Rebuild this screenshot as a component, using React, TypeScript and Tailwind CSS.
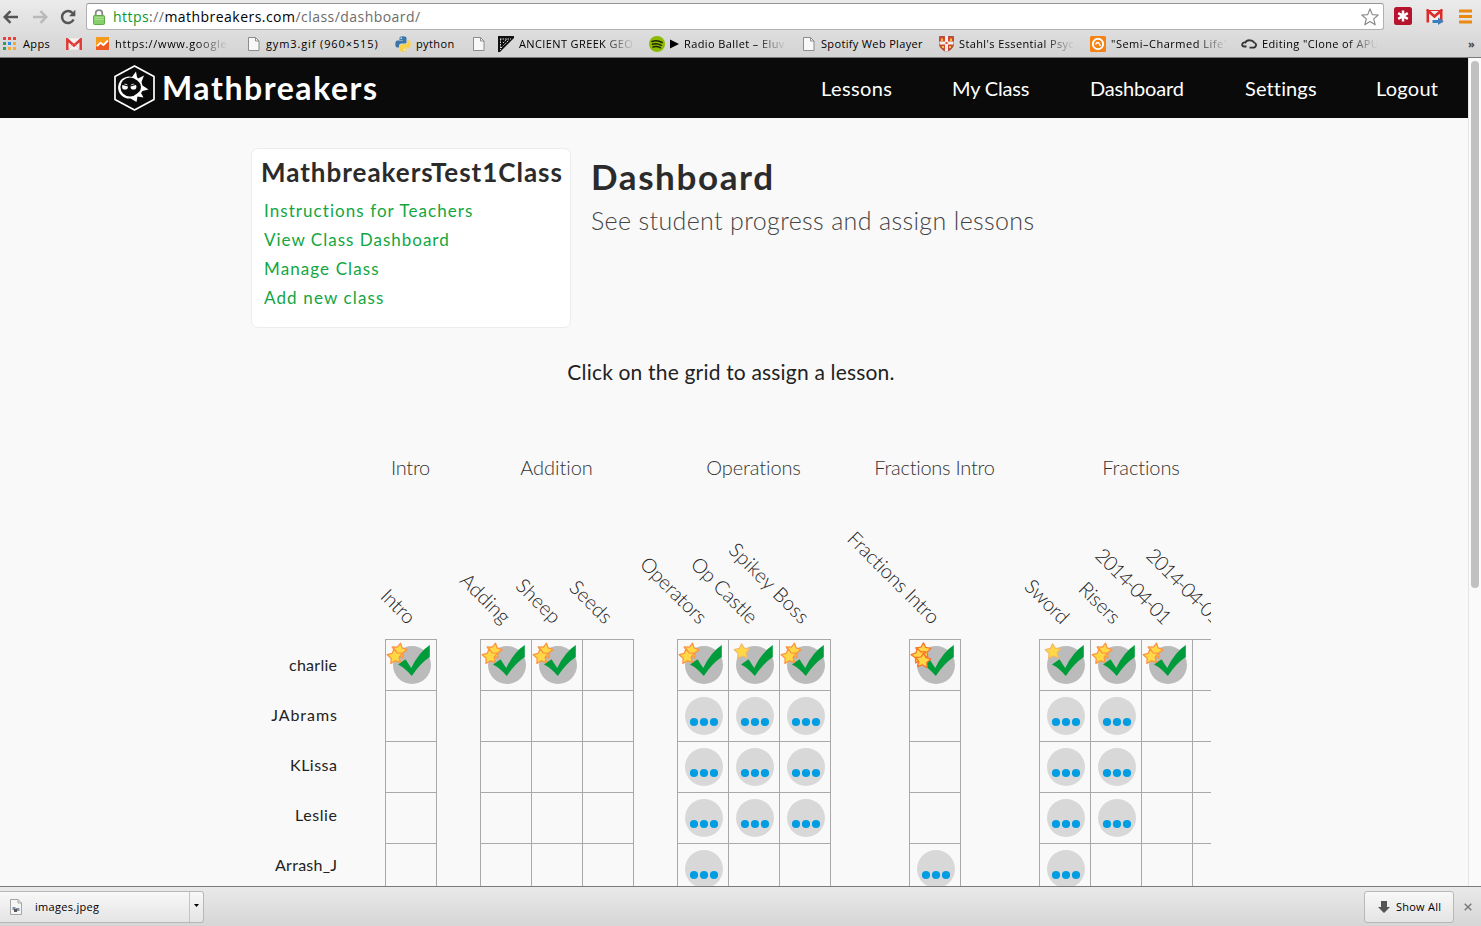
import type { ReactNode } from 'react';

const star = 'M0-7.600 2.400-3.200 7.600-2.400 4 1.500 4.800 6.600 0 4.500-4.800 6.600-4 1.500-7.600-2.400-2.400-3.200Z';

function Star({ x, y, r, tone }: { x: number; y: number; r: number; tone: string }) {
  return (
    <path
      d={star}
      transform={`translate(${x} ${y}) rotate(${r})`}
      fill="#ffd846"
      stroke={tone}
      strokeWidth="1.3"
      strokeLinejoin="round"
    />
  );
}

/* Cell states: "1".."3" = completed with that many stars, "d" = in progress, "." = unassigned */
function CellIcon({ state }: { state: string }) {
  if (state === '.') return null;
  if (state === 'd') {
    return (
      <svg className="-mt-px -ml-px block" width="51" height="51" viewBox="0 0 51 51">
        <circle cx="27" cy="26" r="19" fill="#d8d8d8" />
        <circle cx="17" cy="32" r="4.1" fill="#009de3" />
        <circle cx="27" cy="32" r="4.1" fill="#009de3" />
        <circle cx="37" cy="32" r="4.1" fill="#009de3" />
      </svg>
    );
  }
  return (
    <svg className="-mt-px -ml-px block" width="51" height="51" viewBox="0 0 51 51">
      <circle cx="27" cy="26" r="19" fill="#bbbbbb" />
      <path d="M13 25.5 20.5 20.2 26.2 29Q34 13 44.8 6L44.8 18Q35 24.5 26.8 37Q20 29 13 25.5Z" fill="#009c3b" />
      {state === '1' && <Star x={14} y={12.5} r={-4} tone="#f3b968" />}
      {state === '2' && (
        <>
          <Star x={14.2} y={11.7} r={10} tone="#fb9540" />
          <Star x={10} y={17.3} r={-6} tone="#fb9540" />
        </>
      )}
      {state === '3' && (
        <>
          <Star x={14.2} y={11.5} r={2} tone="#f9762c" />
          <Star x={10} y={16.5} r={-12} tone="#f9762c" />
          <Star x={14} y={21.5} r={6} tone="#f9762c" />
        </>
      )}
    </svg>
  );
}

const base = 'tracking-[-0.25px]';
const date = 'tracking-[-1.1px]';

const groups = [
  { name: 'Intro', track: 'tracking-[-0.3px]', margin: 'ml-12', cols: [['Intro', base]], rows: ['2', '.', '.', '.', '.'] },
  {
    name: 'Addition',
    track: 'tracking-[-0.03px]',
    margin: 'ml-[43px]',
    cols: [['Adding', 'tracking-[0.15px]'], ['Sheep', 'tracking-[0.1px]'], ['Seeds', 'tracking-[0.1px]']],
    rows: ['22.', '...', '...', '...', '...'],
  },
  {
    name: 'Operations',
    track: 'tracking-[-0.09px]',
    margin: 'ml-[43px]',
    cols: [['Operators', base], ['Op Castle', 'tracking-[-0.1px]'], ['Spikey Boss', 'tracking-[0.35px]']],
    rows: ['212', 'ddd', 'ddd', 'ddd', 'd..'],
  },
  { name: 'Fractions Intro', track: 'tracking-[-0.25px]', margin: 'ml-[78px]', cols: [['Fractions Intro', base]], rows: ['3', '.', '.', '.', 'd'] },
  {
    name: 'Fractions',
    track: 'tracking-[-0.08px]',
    margin: 'ml-[78px]',
    cols: [['Sword', base], ['Risers', base], ['2014-04-01', date], ['2014-04-01', date]],
    rows: ['122.', 'dd..', 'dd..', 'dd..', 'd...'],
  },
];

function ProgressGrid() {
  return (
    <section className="flex h-[431px] w-[960px] overflow-hidden text-[#222]">
      <ul className="w-[86px] shrink-0 pt-[185px] text-right text-base leading-[50px]">
        <li className="mr-[-0.3px] tracking-[0.27px]">charlie</li>
        <li className="mr-[-0.9px] tracking-[0.95px]">JAbrams</li>
        <li className="mr-[-0.5px] tracking-[0.5px]">KLissa</li>
        <li className="mr-[-0.6px] tracking-[0.6px]">Leslie</li>
        <li className="mr-[-0.3px] tracking-[0.25px]">Arrash_J</li>
      </ul>
      {groups.map((g) => (
        <div key={g.name} className={`${g.margin} shrink-0`}>
          <div className="flex w-0 min-w-full justify-center">
            <h3 className={`-ml-px text-[20px] leading-6 font-light whitespace-nowrap text-[#333] ${g.track}`}>{g.name}</h3>
          </div>
          <div className="flex h-[160px]">
            {g.cols.map(([c, track], i) => (
              <div key={i} className="relative w-[51px]">
                <span className={`absolute right-[32px] bottom-[11px] origin-bottom-right rotate-45 text-[20px] leading-6 font-light whitespace-nowrap ${track}`}>
                  {c}
                </span>
              </div>
            ))}
          </div>
          <div className="border-t border-l border-[#a9a9a9]">
            {g.rows.map((r, i) => (
              <div key={i} className="flex">
                {r.split('').map((s, j) => (
                  <div key={j} className="size-[51px] border-r border-b border-[#a9a9a9]">
                    <CellIcon state={s} />
                  </div>
                ))}
              </div>
            ))}
          </div>
        </div>
      ))}
    </section>
  );
}

function PageIcon() {
  return (
    <svg width="12" height="14" viewBox="0 0 12 14">
      <path d="M.5.5H7.5L11 4V13.5H.5Z" fill="#f8f8f8" stroke="#8c8c8c" />
      <path d="M7.5.5V4H11" fill="none" stroke="#8c8c8c" />
    </svg>
  );
}

function Bookmark({ width, icon, iconWidth, children, fade }: { width: string; icon: ReactNode; iconWidth: string; children?: ReactNode; fade?: string }) {
  return (
    <div className={`flex shrink-0 items-center ${width}`}>
      <span className={`shrink-0 ${iconWidth}`}>{icon}</span>
      <span className={`whitespace-nowrap ${fade ?? ''}`}>{children}</span>
    </div>
  );
}

const fade = 'mask-[linear-gradient(to_right,#000_calc(100%-32px),transparent)]';

function BookmarksBar() {
  return (
    <div className="flex h-[27px] items-center pl-[3px] text-[11px] leading-4 tracking-[0.38px] text-black">
      <Bookmark
        width="w-[63px]"
        iconWidth="w-5"
        icon={
          <svg width="13" height="13" viewBox="0 0 13 13">
            <path d="M0 0h3v3H0zM5 0h3v3H5zM10 0h3v3h-3z" fill="#e8403a" />
            <path d="M0 5h3v3H0zM0 10h3v3H0z" fill="#2f9e5c" />
            <path d="M5 5h3v3H5z" fill="#2f8df0" />
            <path d="M10 5h3v3h-3zM5 10h3v3H5zM10 10h3v3h-3z" fill="#f6a93b" />
          </svg>
        }
      >
        Apps
      </Bookmark>
      <Bookmark
        width="w-[30px]"
        iconWidth="w-4"
        icon={
          <svg width="16" height="12" viewBox="0 0 16 12">
            <path d="M0 .5h16v11H0z" fill="#f7f3f3" />
            <path d="M1.3 12V1.5L8 7.5l6.700-6V12" fill="none" stroke="#dd3b33" strokeWidth="2.500" />
            <path d="M3 11 6.500 6.500M13 11 9.500 6.500" stroke="#d8b8b6" strokeWidth=".7" />
          </svg>
        }
      />
      <Bookmark
        width="w-[152px]"
        iconWidth="w-[19px]"
        fade={`w-[113px] tracking-[0.68px] ${fade}`}
        icon={
          <svg width="13" height="13" viewBox="0 0 13 13">
            <path d="M0 0h13v13H0z" fill="#f59a1c" />
            <path d="M0 10 4 6 7 8.500 13 3V13H0Z" fill="#ee5b22" />
            <path d="m1 9 3.500-3.200L7.500 8 12 3.500" fill="none" stroke="#fff" strokeWidth="1.800" />
          </svg>
        }
      >
        https://www.google.
      </Bookmark>
      <Bookmark width="w-[147px]" iconWidth="w-[18px]" icon={<PageIcon />}>
        <span className="tracking-[0.88px]">gym3.gif (960×515)</span>
      </Bookmark>
      <Bookmark
        width="w-[78px]"
        iconWidth="w-[21px]"
        icon={
          <svg width="16" height="16" viewBox="0 0 16 16">
            <path d="M4.500 2Q4.500.3 8 .3T11.500 2V6Q11.500 7.500 10 7.500H6Q4 7.500 4 10V11.500H2.200Q.3 11.500.3 8T2.500 4.500H8V4H4.500Z" fill="#3c75a8" />
            <path d="M11.500 14Q11.500 15.700 8 15.700T4.500 14V10.500Q4.500 8.500 6.500 8.500H10Q12.300 8.500 12.300 6V4.500H13.800Q15.700 4.500 15.700 8T13.500 11.800H8V12.300H11.500Z" fill="#fbd243" />
            <circle cx="6.200" cy="2.300" r=".8" fill="#fff" />
            <circle cx="9.800" cy="13.800" r=".8" fill="#fff" />
          </svg>
        }
      >
        python
      </Bookmark>
      <Bookmark width="w-[25px]" iconWidth="w-3" icon={<PageIcon />} />
      <Bookmark
        width="w-[151px]"
        iconWidth="w-[21px]"
        fade={`w-[116px] ${fade}`}
        icon={
          <svg width="16" height="16" viewBox="0 0 16 16">
            <path d="M0 0H16V2L2 16H0Z" fill="#111" />
            <path d="M2 3H13M2.500 3V14M5 7 9 3M3 12 5 10M5.500 9.500 11 4" stroke="#ddd" strokeDasharray="1.500 1" />
          </svg>
        }
      >
        ANCIENT GREEK GEO
      </Bookmark>
      <Bookmark
        width="w-[154px]"
        iconWidth="w-[21px]"
        fade={`w-[117px] tracking-[0.4px] ${fade}`}
        icon={
          <svg width="16" height="16" viewBox="0 0 16 16">
            <circle cx="8" cy="8" r="8" fill="#8db900" />
            <path d="M3 5.500Q8.500 3.800 13 6.500M3.500 8.300Q8.300 7 12.200 9.300M4 11Q8 9.900 11.500 11.800" fill="none" stroke="#1c2600" strokeWidth="1.500" strokeLinecap="round" />
          </svg>
        }
      >
        <svg className="mr-[5px] inline-block align-[-1px]" width="9" height="10" viewBox="0 0 9 10">
          <path d="M0 .5 9 5 0 9.500Z" />
        </svg>
        Radio Ballet – Eluv
      </Bookmark>
      <Bookmark width="w-[136px]" iconWidth="w-[18px]" icon={<PageIcon />}>
        <span className="tracking-[0.34px]">Spotify Web Player</span>
      </Bookmark>
      <Bookmark
        width="w-[151px]"
        iconWidth="w-5"
        fade={`w-[116px] ${fade}`}
        icon={
          <svg width="15" height="16" viewBox="0 0 15 16">
            <path d="M.5.5H14.500V8Q14.500 13 7.500 15.700Q.5 13 .5 8Z" fill="#d2492f" stroke="#9c5a46" />
            <path d="M7.500 0V15.500M.5 7H14.500" stroke="#f3eeee" strokeWidth="3" />
            <path d="M3 2.500v2.500M12 2.500v2.500M4 10v2M11 10v2" stroke="#f0c24a" strokeWidth="2" />
            <path d="M6.500 6h2v2h-2z" fill="#d2492f" />
          </svg>
        }
      >
        Stahl's Essential Psyc
      </Bookmark>
      <Bookmark
        width="w-[151px]"
        iconWidth="w-[21px]"
        fade={`w-[117px] tracking-[0.5px] ${fade}`}
        icon={
          <svg width="16" height="16" viewBox="0 0 16 16">
            <rect width="16" height="16" rx="1.500" fill="#f58213" />
            <circle cx="8" cy="8" r="5.200" fill="none" stroke="#fff" strokeWidth="1.900" />
            <path d="M5.500 8.500Q7 5.500 9 7.200L10.500 10" fill="none" stroke="#fff" strokeWidth="1.500" />
          </svg>
        }
      >
        "Semi–Charmed Life"
      </Bookmark>
      <Bookmark
        width="w-[227px]"
        iconWidth="w-[21px]"
        fade={`w-[116px] ${fade}`}
        icon={
          <svg width="16" height="10" viewBox="0 0 16 10">
            <path d="M5.500 7.500H3Q.6 7 1.300 5T4.500 3.500Q5.500 1 9 1.300T13 3.500Q15.500 4.300 15 6.500T11.500 8.700H8.500" fill="none" stroke="#333" strokeWidth="1.800" />
          </svg>
        }
      >
        Editing "Clone of APU
      </Bookmark>
      <span className="font-bold text-[#444]">»</span>
    </div>
  );
}

function Toolbar() {
  return (
    <header className="h-[58px] shrink-0 border-b border-[#7b7b7b] bg-linear-to-b from-[#ebebeb] to-[#d3d3d3] font-['Open_Sans',sans-serif]">
      <div className="flex h-[30px] items-center pt-[3px]">
        <svg className="ml-[3px] shrink-0" width="16" height="14" viewBox="0 0 16 14">
          <path d="M15 7H2M7.500 1.200 1.700 7l5.800 5.800" fill="none" stroke="#555" strokeWidth="2.400" />
        </svg>
        <svg className="ml-[13px] shrink-0" width="16" height="14" viewBox="0 0 16 14">
          <path d="M1 7H14M8.500 1.200 14.300 7l-5.800 5.800" fill="none" stroke="#b9b9b9" strokeWidth="2.400" />
        </svg>
        <svg className="ml-3 shrink-0" width="16" height="16" viewBox="0 0 16 16">
          <path d="M12.500 4A6 6 0 1 0 13.500 10.500" fill="none" stroke="#555" strokeWidth="2.500" />
          <path d="M15.300.8V7.200H9Z" fill="#555" />
        </svg>
        <div className="ml-[10px] flex h-[27px] w-[1298px] items-center rounded-[3px] border border-[#b0b0b0] border-t-[#969696] bg-white pl-[6px]">
          <svg width="12" height="16" viewBox="0 0 12 16">
            <path d="M2.700 8V4.500Q2.700 1.200 6 1.200T9.300 4.500V8" fill="none" stroke="#8b8b8b" strokeWidth="1.800" />
            <rect x=".5" y="6.500" width="11" height="9" rx="1" fill="#86cf6a" stroke="#5cab45" />
            <path d="M1.500 8.500h9M1.500 10.500h9" stroke="#a8e08f" />
          </svg>
          <p className="ml-[8px] text-[14px] leading-5 tracking-[0.46px] text-[#6c6c6c]">
            <span className="text-[#0a9a2c]">https</span>://<span className="text-black">mathbreakers.com</span>/class/dashboard/
          </p>
          <svg className="mr-1 ml-auto" width="18" height="18" viewBox="0 0 18 18">
            <path d="M9 .9 11.300 6.600 17.200 7 12.700 10.900 14.200 16.800 9 13.500 3.800 16.800 5.300 10.900.8 7 6.700 6.600Z" fill="#fff" stroke="#8a8a8a" strokeWidth="1.200" strokeLinejoin="round" />
          </svg>
        </div>
        <svg className="mt-[-2px] ml-[10px] shrink-0" width="18" height="18" viewBox="0 0 18 18">
          <rect width="18" height="18" rx="2.500" fill="#b5142c" />
          <path d="M9 3.500V14.500M4.200 6.200 13.800 11.800M4.200 11.800 13.800 6.200" stroke="#fff" strokeWidth="2.500" />
        </svg>
        <svg className="ml-[14px] shrink-0" width="18" height="16" viewBox="0 0 18 16">
          <path d="M.5 1h16v12.500H.5z" fill="#f6eeee" />
          <path d="M1.800 13.500V1.500L8.500 7.500 15.200 1.500V13.500" fill="none" stroke="#dc2a26" strokeWidth="2.600" />
          <path d="M.5 1.500h16" stroke="#dc2a26" />
          <path d="M6.500 11H12V8.500L17.700 12.300 12 16V13.900H6.500Z" fill="#3b7ec0" />
        </svg>
        <svg className="ml-[15px] shrink-0" width="14" height="15" viewBox="0 0 14 15">
          <path d="M0 2H13M0 7.500H13M0 13H13" stroke="#ec8a10" strokeWidth="3" />
        </svg>
      </div>
      <BookmarksBar />
    </header>
  );
}

function SiteNav() {
  return (
    <nav className="flex h-[60px] items-center bg-[#0a0a0a] pr-[30px] pl-[114px] text-white">
      <svg width="41" height="46" viewBox="0 0 41 46">
        <path d="M20.500 1 40 11.500V34.500L20.500 45 1 34.500V11.500Z" fill="none" stroke="#fff" strokeWidth="1.700" strokeLinejoin="round" />
        <path d="M18 12 22 6.500 23 12 24 13.500 30 10.500 27.500 17 28.500 20.500 34.500 24.500 28.500 26 27 28 29.500 32.500 23.500 31.500 22.500 37 16.500 33.500A11 11 0 1 1 18 12Z" fill="#fff" />
        <circle cx="16" cy="22" r="9.600" fill="#0a0a0a" />
        <circle cx="20" cy="22" r="7" fill="#0a0a0a" />
        <circle cx="11" cy="21.700" r="2.900" fill="#fff" />
        <circle cx="19.500" cy="21.700" r="2.900" fill="#fff" />
        <path d="M8 19.200 14 21M22.500 19.200 16.500 21" stroke="#0a0a0a" strokeWidth="1.300" />
      </svg>
      <span className="ml-[7px] text-[32px] leading-10 font-bold tracking-[1.55px]">Mathbreakers</span>
      <ul className="ml-auto flex gap-[60px] pb-px text-[20px] leading-6 whitespace-nowrap">
        <li className="w-[71px] tracking-[0.4px]">Lessons</li>
        <li className="w-[78px] tracking-[-0.16px]">My Class</li>
        <li className="w-[95px] tracking-[-0.16px]">Dashboard</li>
        <li className="w-[71px] tracking-[0.13px]">Settings</li>
        <li className="w-[62px] tracking-[0.25px]">Logout</li>
      </ul>
    </nav>
  );
}

export default function App() {
  return (
    <div className="flex h-[926px] w-[1481px] flex-col overflow-hidden bg-[#f9f9f9] font-[Lato,sans-serif]">
      <Toolbar />
      <div className="flex h-[828px] shrink-0">
        <div className="w-[1468px] overflow-hidden">
          <SiteNav />
          <main className="pt-[30px] pl-[251px]">
            <div className="flex">
              <aside className="h-[180px] w-[320px] rounded-[7px] border border-[#ececec] bg-white pt-[7px] pl-[10px]">
                <h2 className="-ml-px text-[26px] leading-8 font-bold tracking-[0.98px] whitespace-nowrap text-[#2b2b2b]">MathbreakersTest1Class</h2>
                <ul className="pt-[8px] pl-[2px] text-[17px] leading-[29px] text-[#13a63f]">
                  <li className="tracking-[1.06px]">Instructions for Teachers</li>
                  <li className="tracking-[1px]">View Class Dashboard</li>
                  <li className="tracking-[1.1px]">Manage Class</li>
                  <li className="tracking-[1.14px]">Add new class</li>
                </ul>
              </aside>
              <div className="ml-5 pt-[7px]">
                <h1 className="text-[35px] leading-[42px] font-bold tracking-[1.6px] text-[#2b2b2b]">Dashboard</h1>
                <p className="pt-[7px] text-[25px] leading-[32px] font-light tracking-[0.36px] text-[#444]">See student progress and assign lessons</p>
              </div>
            </div>
            <p className="w-[960px] pt-[30px] text-center text-[21px] leading-7 tracking-[0.18px] text-[#222]">Click on the grid to assign a lesson.</p>
            <div className="pt-[69px]">
              <ProgressGrid />
            </div>
          </main>
        </div>
        <div className="flex grow justify-center border-l border-[#e5e5e5] bg-[#fafafa] pt-[3px]">
          <div className="h-[527px] w-2 rounded-full bg-[#c1c1c1]" />
        </div>
      </div>
      <footer className="flex h-10 shrink-0 items-center border-t border-[#7b7b7b] bg-linear-to-b from-[#e9e9e9] to-[#d6d6d6] font-['Open_Sans',sans-serif] text-[11px] text-black">
        <div className="flex h-8 w-[204px] items-center rounded-r-[3px] border border-l-0 border-[#b8b8b8] bg-linear-to-b from-[#f8f8f8] to-[#e4e4e4] pl-[10px]">
          <svg width="12" height="16" viewBox="0 0 12 16">
            <path d="M.5.5H8L11.500 4V15.500H.5Z" fill="#f6f6f6" stroke="#a5a5a5" />
            <path d="M8 .5V4h3.500" fill="none" stroke="#a5a5a5" />
            <path d="M2.500 8h3v3h-3zM6 9h3.500v3H6z" fill="#8191ab" />
            <path d="M4 10h3v3H4z" fill="#5b5652" />
          </svg>
          <span className="ml-[13px] pt-[2px] tracking-[0.3px]">images.jpeg</span>
          <div className="ml-auto flex h-[30px] w-[14px] items-center justify-center border-l border-[#c4c4c4] pb-[3px]">
            <svg width="5" height="3" viewBox="0 0 5 3">
              <path d="M0 0h5L2.500 3Z" />
            </svg>
          </div>
        </div>
        <div className="ml-auto flex h-8 w-[90px] items-center rounded-[3px] border border-[#b8b8b8] bg-linear-to-b from-[#f8f8f8] to-[#e4e4e4] pl-[13px]">
          <svg width="12" height="12" viewBox="0 0 12 12">
            <path d="M3 0h6v6h3L6 12 0 6h3Z" fill="#555" />
          </svg>
          <span className="ml-[6px] pt-[2px] tracking-[0.24px]">Show All</span>
        </div>
        <svg className="mr-[9px] ml-[10px]" width="8" height="8" viewBox="0 0 8 8">
          <path d="M.7.7l6.600 6.600M7.300.7.7 7.300" stroke="#777" strokeWidth="1.400" />
        </svg>
      </footer>
    </div>
  );
}
